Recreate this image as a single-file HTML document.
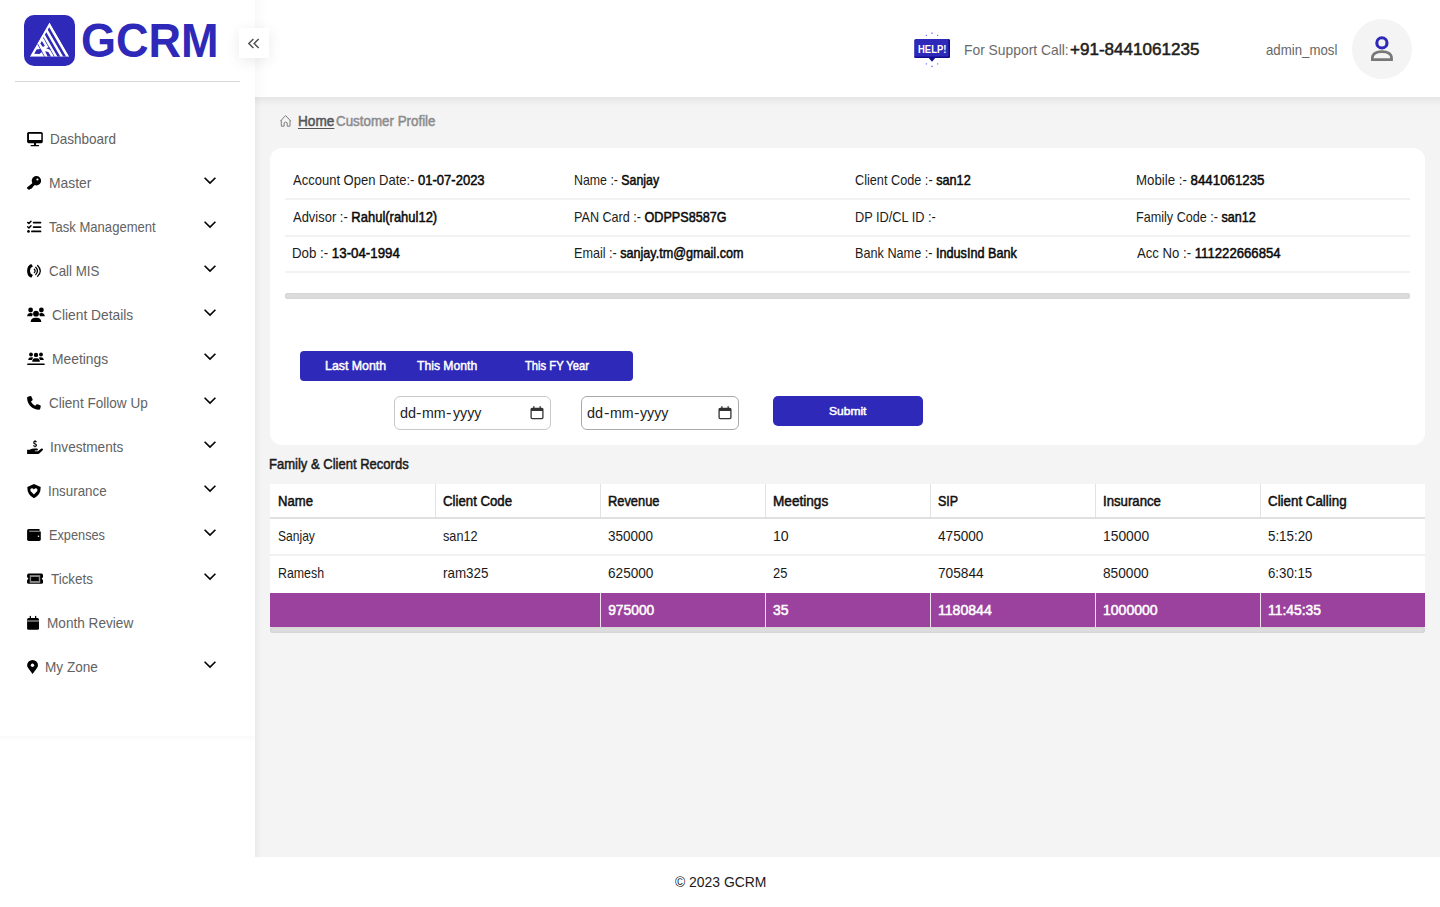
<!DOCTYPE html>
<html><head><meta charset="utf-8">
<style>
*{box-sizing:border-box;margin:0;padding:0}
html,body{width:1440px;height:907px;overflow:hidden;background:#fff;font-family:"Liberation Sans",sans-serif;color:#111}
.a{position:absolute}
.t{position:absolute;white-space:nowrap;line-height:1;transform-origin:0 0}
#main{position:absolute;left:255px;top:0;width:1185px;height:857px;background:#f4f4f4}
#mainsh{position:absolute;left:255px;top:0;width:7px;height:857px;background:linear-gradient(to right,rgba(0,0,0,.04),rgba(0,0,0,0))}
#header{position:absolute;left:255px;top:0;width:1185px;height:97px;background:#fff}
#hdrsh{position:absolute;left:255px;top:97px;width:1185px;height:9px;background:linear-gradient(to bottom,rgba(0,0,0,.06),rgba(0,0,0,0))}
#sidebar{position:absolute;left:0;top:0;width:255px;height:737px;background:#fff}
#sbsh{position:absolute;left:0;top:736px;width:255px;height:6px;background:linear-gradient(to bottom,rgba(0,0,0,.018),rgba(0,0,0,0))}
</style></head><body>
<div id="main"></div>
<div id="mainsh"></div>
<div id="header"></div>
<div class="a" style="left:255px;top:0;width:12px;height:97px;background:linear-gradient(to right,rgba(0,0,0,.022),rgba(0,0,0,0))"></div>
<div id="hdrsh"></div>
<div id="sidebar"></div>
<div id="sbsh"></div>

<!-- logo -->
<div class="a" style="left:24px;top:15px;width:51px;height:51px;border-radius:10px;background:#2e29b8"></div>
<svg class="a" style="left:24px;top:15px" width="51" height="51" viewBox="24 15 51 51">
  <defs>
   <clipPath id="tri"><polygon points="49.48,22.3 69.4,56.7 29.7,56.7"/></clipPath>
   <clipPath id="inner"><polygon points="49.49,26.8 75,26.8 75,60 30.4,60"/></clipPath>
  </defs>
  <g clip-path="url(#tri)">
   <polygon fill="#fff" points="49.48,22.3 69.4,56.7 29.7,56.7"/>
   <g fill="#2e29b8" clip-path="url(#inner)">
    <polygon points="63.3,56.7 66.2,56.7 49.21,27.3 46.3,27.3"/>
    <polygon points="57.5,56.7 60.4,56.7 40.57,22.3 37.67,22.3"/>
    <polygon points="54.0,56.7 54.8,56.7 34.97,22.3 34.17,22.3"/>
   </g>
   <g fill="#2e29b8">
    <polygon points="45.1,51.2 48.4,51.9 51.1,56.7 47.7,56.7"/>
    <polygon points="46.1,48.3 49.3,46.9 50.9,49.9"/>
    <polygon points="40.3,43.4 41.9,41 44.8,45.8 42.9,47.1"/>
    <path d="M36.6 49.5 Q37.3 49.0 40.8 49.0 L41.9 51.9 L39.5 54 L34.2 53.7 Z"/>
   </g>
   <path d="M37.6 43.9 L44.6 56.8" stroke="#2e29b8" stroke-width=".8"/>
  </g>
</svg>

<div class="a" style="left:15px;top:81px;width:225px;height:1px;background:#d6d6d6"></div>

<!-- collapse button -->
<div class="a" style="left:239px;top:28px;width:30px;height:30px;background:#fff;box-shadow:0 3px 14px rgba(0,0,0,.085)"></div>
<svg class="a" style="left:246px;top:36px" width="16" height="14" viewBox="0 0 16 14"><path d="M7.4 3 L2.8 7.5 L7.4 12 M12.7 3 L8.1 7.5 L12.7 12" fill="none" stroke="#505050" stroke-width="1.45"/></svg>

<!-- sidebar icons -->
<svg class="a" style="left:0;top:0" width="255" height="737" viewBox="0 0 255 737">
 <g fill="#000">
  <!-- desktop -->
  <rect x="27.1" y="131.9" width="15.7" height="11.3" rx="1.6"/>
  <rect x="29" y="133.8" width="12.3" height="6.2" fill="#fff"/>
  <rect x="34" y="143" width="2" height="2.3"/>
  <rect x="30.6" y="145" width="8.5" height="1.3" rx=".6"/>
  <!-- key -->
  <circle cx="36.4" cy="180.8" r="4.7"/>
  <circle cx="37.4" cy="179.5" r="1.1" fill="#fff"/>
  <path d="M33.2 182.6 L35.2 184.6 L30.8 189 L30.5 188.7 L29.4 189.8 L28.2 189.6 L27.2 188.6 L27 187.4 Z"/>
  <path d="M30.9 185.6 L32.6 187.3 L30.9 189 L29.2 187.3 Z" />
  <!-- list-check -->
  <g stroke="#000" fill="none" stroke-width="1.45" stroke-linecap="round" stroke-linejoin="round">
   <polyline points="27.7,222.4 28.9,223.6 31,221.3"/>
   <polyline points="27.7,226.8 28.9,228 31,225.7"/>
   <path d="M33.6 222.6 H40.5 M33.6 227 H40.5 M31.9 231.4 H40.5" stroke-width="1.75"/>
  </g>
  <circle cx="28.5" cy="231.4" r="1.35"/>
  <!-- phone volume -->
  <path d="M31.3 263.9 L32.9 266.6 L30.6 268.1 Q29.5 270.9 30.6 273.6 L32.9 275.1 L31.3 277.8 Q27.1 276.2 27.1 270.9 Q27.1 265.5 31.3 263.9 Z"/>
  <g stroke="#000" fill="none" stroke-width="1.25" stroke-linecap="round">
   <path d="M34.3 269.2 Q36 270.9 34.3 272.6"/>
   <path d="M35.7 267.3 Q39.2 270.9 35.7 274.6"/>
   <path d="M37.6 265.5 Q43 270.9 37.6 276.4"/>
  </g>
  <!-- users -->
  <circle cx="30.6" cy="310" r="2.4"/>
  <circle cx="41.4" cy="310" r="2.4"/>
  <circle cx="36" cy="313.7" r="2.9"/>
  <path d="M27.1 316.2 Q27.5 313 30.6 313 Q32.3 313 33 314 Q32 315 32.2 316.2 Z"/>
  <path d="M44.8 316.2 Q44.4 313 41.4 313 Q39.7 313 39 314 Q40 315 39.8 316.2 Z"/>
  <path d="M30.6 321.9 Q31 317.8 35.4 317.8 L36.6 317.8 Q41 317.8 41.3 321.9 Z"/>
  <!-- people group -->
  <circle cx="31" cy="354.5" r="1.9"/>
  <circle cx="41" cy="354.5" r="1.9"/>
  <circle cx="36" cy="354.9" r="2.2"/>
  <path d="M28.2 359.9 Q28.4 357.2 31.2 357.2 L33.2 357.6 L31.8 359.9 Z"/>
  <path d="M43.8 359.9 Q43.6 357.2 40.8 357.2 L38.8 357.6 L40.2 359.9 Z"/>
  <path d="M32.2 361.7 Q32.4 358.3 35 358.3 L37 358.3 Q39.6 358.3 39.9 361.7 Z"/>
  <rect x="27.1" y="363.5" width="17.7" height="1.5" rx=".7"/>
  <!-- phone -->
  <path transform="translate(27.1 396) scale(0.02676)" d="M164.9 24.6c-7.7-18.6-28-28.5-47.4-23.2l-88 24C12.1 30.2 0 46 0 64C0 311.4 200.6 512 448 512c18 0 33.8-12.1 38.6-29.5l24-88c5.3-19.4-4.6-39.7-23.2-47.4l-96-40c-16.3-6.8-35.2-2.1-46.3 11.6L304.7 368C234.3 334.7 177.3 277.7 144 207.3L193.3 167c13.7-11.2 18.4-30 11.6-46.3l-40-96z"/>
  <!-- hand holding dollar -->
  <path d="M27.1 449.8 L29.6 449.8 Q31.8 448.4 34.6 448.4 L37.3 448.5 Q38.6 449.4 37.4 450.5 L34.6 450.5 L35 451.3 L37.9 451.2 L41.4 448.6 Q43.4 448.2 42.9 450.1 L39.3 453.4 Q38.3 454.1 36.8 454.1 L27.1 454.1 Z"/>
  <path d="M36.5 442.2 Q35.9 441.4 35 441.4 Q33.7 441.4 33.7 442.6 Q33.7 443.6 35 443.9 Q36.4 444.2 36.4 445.2 Q36.4 446.2 35 446.2 Q34 446.2 33.4 445.4 M35.05 440.2 V441.4 M35.05 446.2 V447.3" fill="none" stroke="#000" stroke-width="1.15"/>
  <!-- shield heart -->
  <path d="M34 484 L40.7 486.9 Q40.9 494.6 34 498.2 Q27.1 494.6 27.3 486.9 Z"/>
  <path d="M33.9 489.6 Q32.6 487.8 31.1 488.5 Q29.9 489.4 30.5 491.1 L33.9 494.4 L37.3 491.1 Q37.9 489.4 36.7 488.5 Q35.2 487.8 33.9 489.6 Z" fill="#fff"/>
  <!-- wallet -->
  <rect x="27.1" y="528.9" width="13.7" height="12" rx="1.6"/>
  <rect x="29.2" y="530.7" width="10.3" height="1.1" fill="#9a9a9a"/>
  <rect x="39.6" y="528.5" width="1.5" height="3" fill="#fff"/>
  <circle cx="38.5" cy="536.3" r=".8" fill="#fff"/>
  <!-- ticket -->
  <rect x="27.1" y="573.6" width="15.9" height="10.2" rx="1.6"/>
  <circle cx="27.1" cy="578.7" r="1.15" fill="#fff"/>
  <circle cx="43" cy="578.7" r="1.15" fill="#fff"/>
  <rect x="29.7" y="575.1" width="10.5" height="7.8" fill="#8a8a8a"/>
  <rect x="31.1" y="577" width="7.7" height="4" />
  <!-- calendar -->
  <rect x="27.1" y="618" width="11.9" height="11.8" rx="1.6"/>
  <rect x="27.1" y="620.3" width="11.9" height="1.4" fill="#8a8a8a"/>
  <rect x="29.7" y="615.8" width="1.3" height="3" rx=".6"/>
  <rect x="35" y="615.8" width="1.3" height="3" rx=".6"/>
  <!-- location -->
  <path d="M32.55 674.1 L28.3 668.2 Q27.1 666.6 27.1 665.4 A5.45 5.45 0 0 1 38 665.4 Q38 666.6 36.8 668.2 Z"/>
  <circle cx="32.5" cy="665.2" r="1.7" fill="#fff"/>
 </g>
 <g stroke="#000" fill="none" stroke-width="1.6">
  <polyline points="204.6,177.7 210,183.1 215.4,177.7"/>
  <polyline points="204.6,221.7 210,227.1 215.4,221.7"/>
  <polyline points="204.6,265.7 210,271.1 215.4,265.7"/>
  <polyline points="204.6,309.7 210,315.1 215.4,309.7"/>
  <polyline points="204.6,353.7 210,359.1 215.4,353.7"/>
  <polyline points="204.6,397.7 210,403.1 215.4,397.7"/>
  <polyline points="204.6,441.7 210,447.1 215.4,441.7"/>
  <polyline points="204.6,485.7 210,491.1 215.4,485.7"/>
  <polyline points="204.6,529.7 210,535.1 215.4,529.7"/>
  <polyline points="204.6,573.7 210,579.1 215.4,573.7"/>
  <polyline points="204.6,661.7 210,667.1 215.4,661.7"/>
 </g>
</svg>

<!-- header right -->
<svg class="a" style="left:910px;top:30px" width="44" height="40" viewBox="0 0 44 40">
  <rect x="4.2" y="8.9" width="35.8" height="19.1" rx="1.6" fill="#2e29b8"/>
  <path d="M38.2 9.1 Q40 9.3 40 11 L40 26.4 Q40 28 38.4 28 L6 28 Q4.4 28 4.3 26.5 L37.6 26.5 Q38.6 26.4 38.6 25.4 Z" fill="#120c8f"/>
  <path d="M18.8 28 L25.2 28 L22 31.7 Z" fill="#120c8f"/>
  <text x="22.2" y="22.6" text-anchor="middle" font-family="Liberation Sans" font-weight="700" font-size="10.6" fill="#fff" textLength="28.4" lengthAdjust="spacingAndGlyphs">HELP!</text>
  <g fill="#7070ff"><rect x="21.3" y="2.5" width="1.4" height="1.4"/><rect x="15.8" y="4.8" width="1.2" height="1.2"/><rect x="27" y="4.8" width="1.2" height="1.2"/><rect x="21.3" y="35.7" width="1.4" height="1.4"/><rect x="15.8" y="33.3" width="1.2" height="1.2"/><rect x="27" y="33.3" width="1.2" height="1.2"/></g>
</svg>
<div class="a" style="left:1352px;top:19px;width:60px;height:60px;border-radius:50%;background:#f4f4f4"></div>
<svg class="a" style="left:1365px;top:32px" width="34" height="34" viewBox="0 0 34 34">
  <circle cx="16.9" cy="10.9" r="5.1" fill="none" stroke="#2e29b8" stroke-width="3.1"/>
  <path d="M7.3 27.6 L7.3 26.4 C7.3 21.6 11.3 19.6 16.9 19.6 C22.5 19.6 26.6 21.6 26.6 26.4 L26.6 27.6 Z" fill="none" stroke="#777" stroke-width="2.6"/>
</svg>

<!-- breadcrumb home icon -->
<svg class="a" style="left:278px;top:113px" width="16" height="16" viewBox="0 0 16 16"><path d="M2.4 8.2 L7.6 2.5 L12.8 8.2 M3.3 7.3 V13.2 H6.1 V9.9 Q7.6 8.2 9.2 9.9 V13.2 H12 V7.3" fill="none" stroke="#7d7d7d" stroke-width="1"/></svg>

<!-- info card -->
<div class="a" style="left:270px;top:148px;width:1155px;height:297px;background:#fff;border-radius:12px"></div>
<div class="a" style="left:285px;top:198px;width:1125px;height:2px;background:#f2f2f2"></div>
<div class="a" style="left:285px;top:235px;width:1125px;height:2px;background:#f2f2f2"></div>
<div class="a" style="left:285px;top:271px;width:1125px;height:2px;background:#f2f2f2"></div>
<div class="a" style="left:285px;top:293px;width:1125px;height:6px;border-radius:3px;background:#dcdcdc;box-shadow:inset 0 0 1.5px rgba(0,0,0,.18)"></div>

<!-- button group -->
<div class="a" style="left:300px;top:351px;width:333px;height:30px;border-radius:4px;background:#2e29b8"></div>
<!-- date inputs -->
<div class="a" style="left:394px;top:396px;width:157px;height:34px;border-radius:6px;border:1px solid #c8c8c8;background:#fff"></div>
<div class="a" style="left:581px;top:396px;width:158px;height:34px;border-radius:6px;border:1px solid #a9a9a9;background:#fff"></div>
<svg class="a" style="left:530px;top:405px" width="14" height="15" viewBox="0 0 14 15"><path d="M2.2 3.4 H11.8 Q12.9 3.4 12.9 4.5 V12.5 Q12.9 13.6 11.8 13.6 H2.2 Q1.1 13.6 1.1 12.5 V4.5 Q1.1 3.4 2.2 3.4 Z" fill="none" stroke="#333" stroke-width="1.3"/><rect x="1.1" y="3.4" width="11.8" height="2.6" fill="#333"/><rect x="3.2" y="1.2" width="1.3" height="2.6" fill="#333"/><rect x="9.5" y="1.2" width="1.3" height="2.6" fill="#333"/></svg>
<svg class="a" style="left:718px;top:405px" width="14" height="15" viewBox="0 0 14 15"><path d="M2.2 3.4 H11.8 Q12.9 3.4 12.9 4.5 V12.5 Q12.9 13.6 11.8 13.6 H2.2 Q1.1 13.6 1.1 12.5 V4.5 Q1.1 3.4 2.2 3.4 Z" fill="none" stroke="#333" stroke-width="1.3"/><rect x="1.1" y="3.4" width="11.8" height="2.6" fill="#333"/><rect x="3.2" y="1.2" width="1.3" height="2.6" fill="#333"/><rect x="9.5" y="1.2" width="1.3" height="2.6" fill="#333"/></svg>
<!-- submit -->
<div class="a" style="left:773px;top:396px;width:150px;height:30px;border-radius:5px;background:#2e29b8"></div>

<!-- table -->
<div class="a" style="left:270px;top:484px;width:1155px;height:109px;background:#fff"></div>
<div class="a" style="left:270px;top:517px;width:1155px;height:2px;background:#e0e0e0"></div>
<div class="a" style="left:270px;top:554px;width:1155px;height:2px;background:#f1f1f1"></div>
<div class="a" style="left:435px;top:484px;width:1px;height:33px;background:#e2e2e2"></div>
<div class="a" style="left:600px;top:484px;width:1px;height:33px;background:#e2e2e2"></div>
<div class="a" style="left:765px;top:484px;width:1px;height:33px;background:#e2e2e2"></div>
<div class="a" style="left:930px;top:484px;width:1px;height:33px;background:#e2e2e2"></div>
<div class="a" style="left:1095px;top:484px;width:1px;height:33px;background:#e2e2e2"></div>
<div class="a" style="left:1260px;top:484px;width:1px;height:33px;background:#e2e2e2"></div>
<div class="a" style="left:270px;top:593px;width:1155px;height:34px;background:#9b429e"></div>
<div class="a" style="left:600px;top:593px;width:1px;height:34px;background:#f0e0f0"></div>
<div class="a" style="left:765px;top:593px;width:1px;height:34px;background:#f0e0f0"></div>
<div class="a" style="left:930px;top:593px;width:1px;height:34px;background:#f0e0f0"></div>
<div class="a" style="left:1095px;top:593px;width:1px;height:34px;background:#f0e0f0"></div>
<div class="a" style="left:1260px;top:593px;width:1px;height:34px;background:#f0e0f0"></div>
<div class="a" style="left:270px;top:627px;width:1155px;height:6px;border-radius:3px;background:#dcdcdc;box-shadow:inset 0 0 1.5px rgba(0,0,0,.18)"></div>

<div class="t" style="left:50.42px;top:132px;font-size:14.6px;color:#626262;transform:scaleX(0.9260);">Dashboard</div>
<div class="t" style="left:49.09px;top:176px;font-size:14.6px;color:#626262;transform:scaleX(0.9523);">Master</div>
<div class="t" style="left:49.14px;top:220px;font-size:14.6px;color:#626262;transform:scaleX(0.8947);">Task Management</div>
<div class="t" style="left:48.73px;top:264px;font-size:14.6px;color:#626262;transform:scaleX(0.9148);">Call MIS</div>
<div class="t" style="left:52.21px;top:308px;font-size:14.6px;color:#626262;transform:scaleX(0.9441);">Client Details</div>
<div class="t" style="left:51.79px;top:352px;font-size:14.6px;color:#626262;transform:scaleX(0.9473);">Meetings</div>
<div class="t" style="left:48.92px;top:396px;font-size:14.6px;color:#626262;transform:scaleX(0.9292);">Client Follow Up</div>
<div class="t" style="left:50.08px;top:440px;font-size:14.6px;color:#626262;transform:scaleX(0.9317);">Investments</div>
<div class="t" style="left:48.40px;top:484px;font-size:14.6px;color:#626262;transform:scaleX(0.9137);">Insurance</div>
<div class="t" style="left:48.58px;top:528px;font-size:14.6px;color:#626262;transform:scaleX(0.8734);">Expenses</div>
<div class="t" style="left:51.03px;top:572px;font-size:14.6px;color:#626262;transform:scaleX(0.9185);">Tickets</div>
<div class="t" style="left:46.91px;top:616px;font-size:14.6px;color:#626262;transform:scaleX(0.9327);">Month Review</div>
<div class="t" style="left:45.21px;top:660px;font-size:14.6px;color:#626262;transform:scaleX(0.9310);">My Zone</div>
<div class="t" style="left:964.19px;top:43px;font-size:14.6px;color:#6a6a6a;transform:scaleX(0.9490);">For Support Call:</div>
<div class="t" style="left:1070.32px;top:42px;font-size:15.7px;color:#1e1e1e;transform:scaleX(1.0866);"><span style="-webkit-text-stroke:0.5px currentColor;">+91-8441061235</span></div>
<div class="t" style="left:1265.97px;top:43px;font-size:14.1px;color:#666666;transform:scaleX(0.9387);">admin_mosl</div>
<div class="t" style="left:297.91px;top:114px;font-size:14px;color:#555555;transform:scaleX(0.9729);text-decoration:underline;text-underline-offset:1.5px;text-decoration-thickness:1px"><span style="-webkit-text-stroke:0.5px currentColor;">Home</span></div>
<div class="t" style="left:336.23px;top:114px;font-size:14px;color:#8c8c8c;transform:scaleX(0.9544);"><span style="-webkit-text-stroke:0.5px currentColor;">Customer Profile</span></div>
<div class="t" style="left:293.10px;top:173px;font-size:14.2px;color:#1c1c1c;transform:scaleX(0.9167);">Account Open Date:- <span style="-webkit-text-stroke:0.5px currentColor;color:#0a0a0a">01-07-2023</span></div>
<div class="t" style="left:574.01px;top:173px;font-size:14.2px;color:#1c1c1c;transform:scaleX(0.8705);">Name :- <span style="-webkit-text-stroke:0.5px currentColor;color:#0a0a0a">Sanjay</span></div>
<div class="t" style="left:855.16px;top:173px;font-size:14.2px;color:#1c1c1c;transform:scaleX(0.8947);">Client Code :- <span style="-webkit-text-stroke:0.5px currentColor;color:#0a0a0a">san12</span></div>
<div class="t" style="left:1135.94px;top:173px;font-size:14.2px;color:#1c1c1c;transform:scaleX(0.9358);">Mobile :- <span style="-webkit-text-stroke:0.5px currentColor;color:#0a0a0a">8441061235</span></div>
<div class="t" style="left:293.10px;top:210px;font-size:14.2px;color:#1c1c1c;transform:scaleX(0.9141);">Advisor :- <span style="-webkit-text-stroke:0.5px currentColor;color:#0a0a0a">Rahul(rahul12)</span></div>
<div class="t" style="left:573.99px;top:210px;font-size:14.2px;color:#1c1c1c;transform:scaleX(0.8887);">PAN Card :- <span style="-webkit-text-stroke:0.5px currentColor;color:#0a0a0a">ODPPS8587G</span></div>
<div class="t" style="left:854.78px;top:210px;font-size:14.2px;color:#1c1c1c;transform:scaleX(0.8990);">DP ID/CL ID :-</div>
<div class="t" style="left:1135.99px;top:210px;font-size:14.2px;color:#1c1c1c;transform:scaleX(0.8891);">Family Code :- <span style="-webkit-text-stroke:0.5px currentColor;color:#0a0a0a">san12</span></div>
<div class="t" style="left:292.04px;top:246px;font-size:14.2px;color:#1c1c1c;transform:scaleX(0.9363);">Dob :- <span style="-webkit-text-stroke:0.5px currentColor;color:#0a0a0a">13-04-1994</span></div>
<div class="t" style="left:573.99px;top:246px;font-size:14.2px;color:#1c1c1c;transform:scaleX(0.8884);">Email :- <span style="-webkit-text-stroke:0.5px currentColor;color:#0a0a0a">sanjay.tm@gmail.com</span></div>
<div class="t" style="left:854.79px;top:246px;font-size:14.2px;color:#1c1c1c;transform:scaleX(0.8928);">Bank Name :- <span style="-webkit-text-stroke:0.5px currentColor;color:#0a0a0a">IndusInd Bank</span></div>
<div class="t" style="left:1137.00px;top:246px;font-size:14.2px;color:#1c1c1c;transform:scaleX(0.9274);">Acc No :- <span style="-webkit-text-stroke:0.5px currentColor;color:#0a0a0a">111222666854</span></div>
<div class="t" style="left:324.51px;top:359px;font-size:13.3px;color:#ffffff;transform:scaleX(0.9299);"><span style="-webkit-text-stroke:0.5px currentColor;">Last Month</span></div>
<div class="t" style="left:416.76px;top:359px;font-size:13.3px;color:#ffffff;transform:scaleX(0.9147);"><span style="-webkit-text-stroke:0.5px currentColor;">This Month</span></div>
<div class="t" style="left:525.28px;top:359px;font-size:13.3px;color:#ffffff;transform:scaleX(0.8427);"><span style="-webkit-text-stroke:0.5px currentColor;">This FY Year</span></div>
<div class="t" style="left:828.52px;top:405px;font-size:11.7px;color:#ffffff;transform:scaleX(1.0286);"><span style="-webkit-text-stroke:0.5px currentColor;">Submit</span></div>
<div class="t" style="left:269.16px;top:457px;font-size:14.3px;color:#1a1a1a;transform:scaleX(0.9111);"><span style="-webkit-text-stroke:0.5px currentColor;">Family &amp; Client Records</span></div>
<div class="t" style="left:277.55px;top:495px;font-size:13.8px;color:#111111;transform:scaleX(0.9486);"><span style="-webkit-text-stroke:0.5px currentColor;">Name</span></div>
<div class="t" style="left:442.64px;top:495px;font-size:13.8px;color:#111111;transform:scaleX(0.9582);"><span style="-webkit-text-stroke:0.5px currentColor;">Client Code</span></div>
<div class="t" style="left:607.72px;top:495px;font-size:13.8px;color:#111111;transform:scaleX(0.9322);"><span style="-webkit-text-stroke:0.5px currentColor;">Revenue</span></div>
<div class="t" style="left:772.66px;top:495px;font-size:13.8px;color:#111111;transform:scaleX(0.9867);"><span style="-webkit-text-stroke:0.5px currentColor;">Meetings</span></div>
<div class="t" style="left:938.00px;top:495px;font-size:13.8px;color:#111111;transform:scaleX(0.9029);"><span style="-webkit-text-stroke:0.5px currentColor;">SIP</span></div>
<div class="t" style="left:1102.51px;top:495px;font-size:13.8px;color:#111111;transform:scaleX(0.9565);"><span style="-webkit-text-stroke:0.5px currentColor;">Insurance</span></div>
<div class="t" style="left:1268.13px;top:495px;font-size:13.8px;color:#111111;transform:scaleX(0.9669);"><span style="-webkit-text-stroke:0.5px currentColor;">Client Calling</span></div>
<div class="t" style="left:278.12px;top:529px;font-size:14.1px;color:#1a1a1a;transform:scaleX(0.8555);">Sanjay</div>
<div class="t" style="left:443.05px;top:529px;font-size:14.1px;color:#1a1a1a;transform:scaleX(0.8990);">san12</div>
<div class="t" style="left:608.34px;top:529px;font-size:14.1px;color:#1a1a1a;transform:scaleX(0.9595);">350000</div>
<div class="t" style="left:772.76px;top:529px;font-size:14.1px;color:#1a1a1a;transform:scaleX(1.0045);">10</div>
<div class="t" style="left:938.23px;top:529px;font-size:14.1px;color:#1a1a1a;transform:scaleX(0.9663);">475000</div>
<div class="t" style="left:1102.73px;top:529px;font-size:14.1px;color:#1a1a1a;transform:scaleX(0.9813);">150000</div>
<div class="t" style="left:1268.27px;top:529px;font-size:14.1px;color:#1a1a1a;transform:scaleX(0.9463);">5:15:20</div>
<div class="t" style="left:277.61px;top:566px;font-size:14.1px;color:#1a1a1a;transform:scaleX(0.8778);">Ramesh</div>
<div class="t" style="left:442.50px;top:566px;font-size:14.1px;color:#1a1a1a;transform:scaleX(0.9515);">ram325</div>
<div class="t" style="left:608.07px;top:566px;font-size:14.1px;color:#1a1a1a;transform:scaleX(0.9654);">625000</div>
<div class="t" style="left:773.10px;top:566px;font-size:14.1px;color:#1a1a1a;transform:scaleX(0.9158);">25</div>
<div class="t" style="left:937.81px;top:566px;font-size:14.1px;color:#1a1a1a;transform:scaleX(0.9722);">705844</div>
<div class="t" style="left:1103.15px;top:566px;font-size:14.1px;color:#1a1a1a;transform:scaleX(0.9722);">850000</div>
<div class="t" style="left:1268.14px;top:566px;font-size:14.1px;color:#1a1a1a;transform:scaleX(0.9405);">6:30:15</div>
<div class="t" style="left:608.20px;top:604px;font-size:13.8px;color:#ffffff;transform:scaleX(1.0000);"><span style="-webkit-text-stroke:0.5px currentColor;">975000</span></div>
<div class="t" style="left:773.33px;top:604px;font-size:13.8px;color:#ffffff;transform:scaleX(1.0078);"><span style="-webkit-text-stroke:0.5px currentColor;">35</span></div>
<div class="t" style="left:938.31px;top:604px;font-size:13.8px;color:#ffffff;transform:scaleX(1.0200);"><span style="-webkit-text-stroke:0.5px currentColor;">1180844</span></div>
<div class="t" style="left:1102.72px;top:604px;font-size:13.8px;color:#ffffff;transform:scaleX(1.0161);"><span style="-webkit-text-stroke:0.5px currentColor;">1000000</span></div>
<div class="t" style="left:1267.83px;top:604px;font-size:13.8px;color:#ffffff;transform:scaleX(1.0053);"><span style="-webkit-text-stroke:0.5px currentColor;">11:45:35</span></div>
<div class="t" style="left:81.30px;top:17px;font-size:48px;color:#2e29b8;transform:scaleX(0.9386);"><span style="font-weight:700">GCRM</span></div>
<div class="t" style="left:399.52px;top:406px;font-size:14px;color:#222222;transform:scaleX(1.0298);">dd</div>
<div class="t" style="left:416.24px;top:406px;font-size:14px;color:#222222;transform:scaleX(1.1714);">-</div>
<div class="t" style="left:422.05px;top:406px;font-size:14px;color:#222222;transform:scaleX(1.0115);">mm</div>
<div class="t" style="left:446.24px;top:406px;font-size:14px;color:#222222;transform:scaleX(1.1714);">-</div>
<div class="t" style="left:452.60px;top:406px;font-size:14px;color:#222222;transform:scaleX(1.0143);">yyyy</div>
<div class="t" style="left:587.32px;top:406px;font-size:14px;color:#222222;transform:scaleX(1.0298);">dd</div>
<div class="t" style="left:604.04px;top:406px;font-size:14px;color:#222222;transform:scaleX(1.1714);">-</div>
<div class="t" style="left:609.85px;top:406px;font-size:14px;color:#222222;transform:scaleX(1.0115);">mm</div>
<div class="t" style="left:634.04px;top:406px;font-size:14px;color:#222222;transform:scaleX(1.1714);">-</div>
<div class="t" style="left:640.40px;top:406px;font-size:14px;color:#222222;transform:scaleX(1.0143);">yyyy</div>
<div class="t" style="left:674.56px;top:875px;font-size:14.5px;color:#1a1a1a;transform:scaleX(0.9597);">© 2023 GCRM</div>
</body></html>
